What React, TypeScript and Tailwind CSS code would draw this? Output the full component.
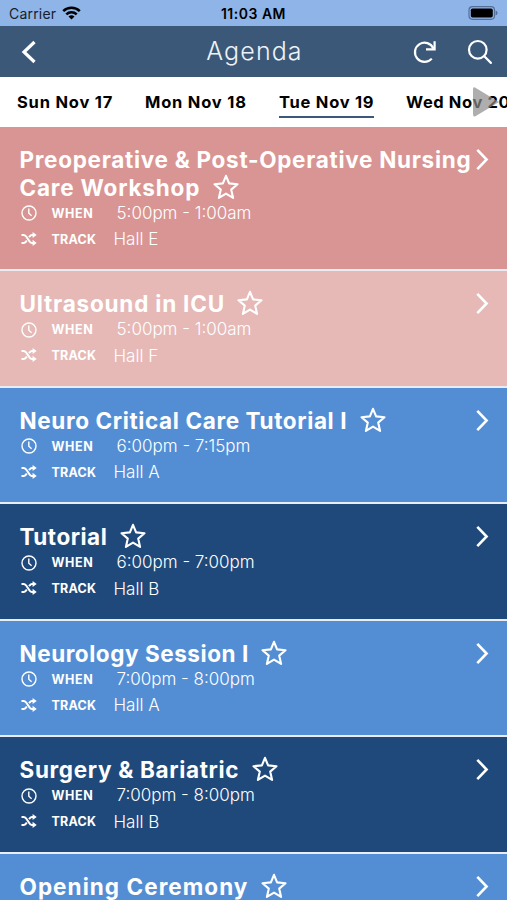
import React, { useState } from 'react';

interface Session {
  lines: { text: string; tracking: string }[];
  when?: string;
  track?: string;
  color: string;
}

const DAYS = [
  { label: 'Sun Nov 17', width: 'w-[96px]', tracking: 'tracking-[0.8px]' },
  { label: 'Mon Nov 18', width: 'w-[102px]', tracking: 'tracking-[0.8px]' },
  { label: 'Tue Nov 19', width: 'w-[95px]', tracking: 'tracking-[0.75px]' },
  { label: 'Wed Nov 20', width: 'w-[110px]', tracking: 'tracking-[0.6px]' },
];

const SESSIONS: Session[] = [
  {
    lines: [
      { text: 'Preoperative & Post-Operative Nursing', tracking: 'tracking-[0.7px]' },
      { text: 'Care Workshop', tracking: 'tracking-[0.8px]' },
    ],
    when: '5:00pm - 1:00am',
    track: 'Hall E',
    color: 'bg-[#d99593]',
  },
  { lines: [{ text: 'Ultrasound in ICU', tracking: 'tracking-[0.8px]' }], when: '5:00pm - 1:00am', track: 'Hall F', color: 'bg-[#e6b9b7]' },
  { lines: [{ text: 'Neuro Critical Care Tutorial I', tracking: 'tracking-[0.62px]' }], when: '6:00pm - 7:15pm', track: 'Hall A', color: 'bg-[#538ed5]' },
  { lines: [{ text: 'Tutorial', tracking: 'tracking-[0.5px]' }], when: '6:00pm - 7:00pm', track: 'Hall B', color: 'bg-[#1f497b]' },
  { lines: [{ text: 'Neurology Session I', tracking: 'tracking-[0.55px]' }], when: '7:00pm - 8:00pm', track: 'Hall A', color: 'bg-[#538ed5]' },
  { lines: [{ text: 'Surgery & Bariatric', tracking: 'tracking-[0.66px]' }], when: '7:00pm - 8:00pm', track: 'Hall B', color: 'bg-[#1f497b]' },
  { lines: [{ text: 'Opening Ceremony', tracking: 'tracking-[1.05px]' }], color: 'bg-[#538ed5]' },
];

function StatusBar() {
  return (
    <div className="grid h-[26px] grid-cols-3 items-center bg-[#8fb4e7] px-[9px] text-black">
      <div className="flex items-center gap-[6px] text-[14px] tracking-[0.2px] text-[#17202e]">
        <span>Carrier</span>
        <svg width="19" height="14" viewBox="0 0 19 14" fill="none" stroke="#000" strokeWidth="2.5">
          <path d="M1.2 5.2a11.8 11.8 0 0 1 16.6 0" />
          <path d="M4.3 8.4a7.4 7.4 0 0 1 10.4 0" />
          <path d="M9.5 13.6 6.5 10.6a4.3 4.3 0 0 1 6 0Z" fill="#000" stroke="none" />
        </svg>
      </div>
      <span className="whitespace-nowrap text-center text-[14px] font-semibold tracking-[0.5px]">11:03 AM</span>
      <svg className="justify-self-end" width="30" height="14" viewBox="0 0 30 14">
        <rect x="1" y="0.7" width="25.500" height="12.6" rx="3.5" fill="none" stroke="#54709a" strokeWidth="1.2" />
        <rect x="2.8" y="2.5" width="22" height="9" rx="1.8" fill="#000" />
        <path d="M27.6 4.6c2.6 1 2.6 3.8 0 4.8z" fill="#54709a" />
      </svg>
    </div>
  );
}

function Header() {
  return (
    <header className="grid h-[51px] grid-cols-3 items-center bg-[#3c5879] pl-[21px] pr-[14px] text-white">
      <svg width="16" height="24" viewBox="0 0 16 24" fill="none" stroke="currentColor" strokeWidth="3.2">
        <path d="M13.5 2 3 12l10.5 10" />
      </svg>
      <h1 className="-ml-[5px] text-center text-[25px] font-light tracking-[1.1px] text-[#eef3f8]">Agenda</h1>
      <div className="flex items-center justify-end gap-[30px]">
        <svg width="24" height="24" viewBox="0 0 24 24" fill="none" stroke="currentColor" strokeWidth="2.2">
          <path d="M18.8 18.6A9.6 9.6 0 1 1 20.4 8.500" />
          <path d="M21.6 1.200v8.100h-8.600" />
        </svg>
        <svg width="26" height="26" viewBox="0 0 26 26" fill="none" stroke="currentColor" strokeWidth="2.2" strokeLinecap="round">
          <circle cx="10.8" cy="10.8" r="8.8" />
          <path d="m17.3 17.3 6.6 6.6" />
        </svg>
      </div>
    </header>
  );
}

function ClockIcon() {
  return (
    <svg width="16" height="16" viewBox="0 0 16 16" fill="none" stroke="currentColor" strokeWidth="1.4">
      <circle cx="8" cy="8" r="7" />
      <path d="M7.8 3.6v4.7l2.8 2.4" />
    </svg>
  );
}

function ShuffleIcon() {
  return (
    <svg className="-mt-[2px]" width="16" height="16" viewBox="0 0 16 16" fill="none" stroke="currentColor" strokeWidth="2">
      <path d="M.5 4h2.100c1.100 0 1.800.5 2.400 1.300l3.700 5.300c.6.8 1.200 1.300 2.300 1.300h2.200" />
      <path d="M.5 11.9h2.100c1.100 0 1.800-.5 2.400-1.300l.8-1.100M8 6.200l.7-.9C9.300 4.500 9.900 4 11 4h2.200" />
      <path d="M11.600.9 15.700 4l-4.100 3.100zM11.600 8.800l4.100 3.100-4.100 3.100z" fill="currentColor" stroke="none" />
    </svg>
  );
}

function StarIcon() {
  return (
    <svg className="-mt-[2px] ml-[12.5px] shrink-0" width="26" height="26" viewBox="0 0 26 26" fill="none" stroke="currentColor" strokeWidth="2.1" strokeLinejoin="round">
      <path d="m13 1.800 3.100 7.600 8.400.8-6.300 5.400 1.900 8.300-7.100-4.300-7.100 4.300 1.900-8.300-6.300-5.400 8.400-.8z" />
    </svg>
  );
}

function SessionRow({ session }: { session: Session }) {
  const last = session.lines.length - 1;
  return (
    <div className={`flex min-h-[116.5px] shrink-0 items-start border-b-2 border-[#e9edf3] pb-[16px] pl-[19.5px] pr-[18.5px] pt-[19px] text-white ${session.color}`}>
      <div className="min-w-0 flex-1">
        <h2 className="text-[22.5px] font-bold leading-[28px]">
          {session.lines.map((line, i) => (
            <span key={line.text} className={`flex h-[28px] items-center whitespace-nowrap ${line.tracking}`}>
              {line.text}
              {i === last && <StarIcon />}
            </span>
          ))}
        </h2>
        {session.when && (
          <div className="-mt-[1.5px] flex h-[26.5px] items-center pl-[1px]">
            <ClockIcon />
            <span className="ml-[15px] w-[65px] pt-[2px] text-[12.5px] font-bold tracking-[0.6px]">WHEN</span>
            <span className="text-[17px] font-light">{session.when}</span>
          </div>
        )}
        {session.track && (
          <div className="flex h-[26.5px] items-center pl-[1px]">
            <ShuffleIcon />
            <span className="ml-[15px] w-[62px] pt-[1px] text-[12.5px] font-bold tracking-[0.2px]">TRACK</span>
            <span className="text-[17px] font-light">{session.track}</span>
          </div>
        )}
      </div>
      <svg className="mt-[2px] shrink-0" width="14" height="23" viewBox="0 0 14 23" fill="none" stroke="currentColor" strokeWidth="2.6">
        <path d="M2.300 1.800 11.600 11.500 2.300 21.200" />
      </svg>
    </div>
  );
}

export default function App() {
  const [day, setDay] = useState('Tue Nov 19');

  return (
    <div className="flex h-screen w-full flex-col overflow-hidden bg-white font-['Inter',sans-serif]">
      <StatusBar />
      <Header />
      <nav className="relative flex h-[49.5px] shrink-0 items-center gap-[32px] overflow-hidden pl-[17px]">
        {DAYS.map(({ label, width, tracking }) => (
          <button
            key={label}
            type="button"
            onClick={() => setDay(label)}
            className={`mt-[2px] h-[31px] shrink-0 whitespace-nowrap border-b-[2.5px] pt-[2px] text-left text-[16.5px] font-bold text-black ${width} ${tracking} ${
              day === label ? 'border-[#3c5879]' : 'border-transparent'
            }`}
          >
            {label}
          </button>
        ))}
        <svg className="absolute left-[473px] top-[9px]" width="27" height="32" viewBox="0 0 27 32">
          <path d="M2 1.5 26 16 2 30.500Q0 31 0 28V3Q0 .5 2 1.500Z" fill="#8c8c8c" fillOpacity="0.7" />
        </svg>
      </nav>
      <main className="flex flex-1 flex-col overflow-hidden">
        {SESSIONS.map((session) => (
          <SessionRow key={session.lines[0].text} session={session} />
        ))}
      </main>
    </div>
  );
}
